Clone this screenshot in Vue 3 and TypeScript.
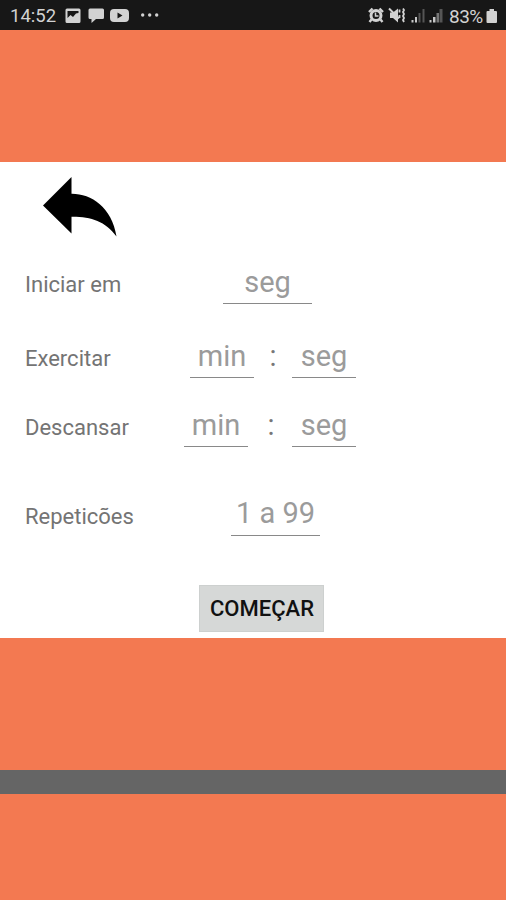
<script setup lang="ts">
import { reactive } from 'vue'

interface Field {
  key: string
  hint: string
  wide?: boolean
}
interface Row {
  name: string
  label: string
  fields: Field[]
}

const rows: Row[] = [
  { name: 'start', label: 'Iniciar em', fields: [{ key: 'startSec', hint: 'seg', wide: true }] },
  { name: 'work', label: 'Exercitar', fields: [{ key: 'workMin', hint: 'min' }, { key: 'workSec', hint: 'seg' }] },
  { name: 'rest', label: 'Descansar', fields: [{ key: 'restMin', hint: 'min' }, { key: 'restSec', hint: 'seg' }] },
  { name: 'reps', label: 'Repeticões', fields: [{ key: 'reps', hint: '1 a 99', wide: true }] },
]
const values = reactive<Record<string, string>>({})
</script>

<template>
  <div class="screen">
    <header class="status">
      <span class="clock">14:52</span>
      <svg class="left-icons" width="98" height="20" viewBox="64 6 98 20">
        <path fill="#d2d2d2" fill-rule="evenodd" d="M67 8.500h12q1.500 0 1.500 1.500v11.500q0 1.500-1.500 1.500H67q-1.500 0-1.500-1.500V10q0-1.500 1.500-1.500zM67.500 11v7l3-3 2.500 2 3-3.500 2.500-.5V11z" />
        <path fill="#d2d2d2" d="M90 8.500h12.500q1.500 0 1.500 1.500v7.500q0 1.500-1.500 1.500H96l-4.500 4V19H90q-1.500 0-1.500-1.500V10q0-1.500 1.500-1.500z" />
        <path fill="#d2d2d2" fill-rule="evenodd" d="M114 9h11q4 0 4 4v5q0 4-4 4h-11q-4 0-4-4v-5q0-4 4-4zM117.500 12.500v6l5-3z" />
        <g fill="#d2d2d2">
          <circle cx="142.700" cy="15" r="1.700" />
          <circle cx="149.700" cy="15" r="1.700" />
          <circle cx="156.700" cy="15" r="1.700" />
        </g>
      </svg>
      <span class="spacer"></span>
      <svg class="right-icons" width="78" height="20" viewBox="367 6 78 20">
        <circle cx="376" cy="15.500" r="5" fill="none" stroke="#d2d2d2" stroke-width="3" />
        <path d="M369 12l3.500-3.500M379.500 8.500l3.500 3.500M371.500 19.500l-2 2.500M380.500 19.500l2 2.500" fill="none" stroke="#d2d2d2" stroke-width="2.400" />
        <path d="M375.500 12.500V16h3" fill="none" stroke="#d2d2d2" stroke-width="1.500" />
        <path d="M390 12.500h3l5-4v14L393 18h-3z" fill="#d2d2d2" />
        <path d="M389 8.500l10 10" stroke="#d2d2d2" stroke-width="2" />
        <path d="M399.500 9.500v3M399.500 15v3M403 8.500l1 1.500-1 2 1 2-1 2 1 2-1 2 1 2" fill="none" stroke="#d2d2d2" stroke-width="1.800" />
        <path d="M411.500 20h2v2.500h-2zM415 17h2v5.500h-2z" fill="#c8c8c8" />
        <path d="M418.500 13h2v9.500h-2zM422.500 9h2v13.500h-2z" fill="#555" />
        <path d="M429.500 20h2v2.500h-2zM433 17h2.500v5.500H433z" fill="#c8c8c8" />
        <path d="M436.500 13h2.500v9.500h-2.500z" fill="#777" />
        <path d="M439.500 9h3v13.500h-3z" fill="#555" />
      </svg>
      <span class="percent">83%</span>
      <svg class="battery" width="12" height="16" viewBox="0 0 12 16">
        <path d="M3.500 1h4.500v2H10q1 0 1 1v10q0 1-1 1H1.500q-1 0-1-1V4q0-1 1-1h2z" fill="#d2d2d2" />
      </svg>
    </header>

    <main class="panel">
      <button class="back" aria-label="Voltar">
        <svg width="76" height="62" viewBox="42 176 76 62">
          <path d="M43 205.500L71.500 177v16.700C91 193.500 112 207 116.500 236.500C105 221 91 216.500 71.500 216.700V233.500z" />
        </svg>
      </button>
      <div v-for="row in rows" :key="row.name" class="row" :class="row.name">
        <span class="label">{{ row.label }}</span>
        <template v-for="(field, i) in row.fields" :key="field.key">
          <span v-if="i > 0" class="colon">:</span>
          <input v-model="values[field.key]" class="field" :class="{ wide: field.wide }" :placeholder="field.hint" :aria-label="row.label" />
        </template>
      </div>
      <button class="begin">COMEÇAR</button>
    </main>
    <div class="divider"></div>
  </div>
</template>

<style>
body {
  margin: 0;
}
</style>

<style scoped>
.screen {
  display: flex;
  flex-direction: column;
  width: 506px;
  height: 900px;
  overflow: hidden;
  background: #f37951;
  font-family: Roboto, sans-serif;
}
.status {
  display: flex;
  align-items: center;
  box-sizing: border-box;
  height: 30px;
  padding: 2px 8px 0 10px;
  background: #171717;
  color: #d2d2d2;
}
.status svg {
  flex: none;
  display: block;
}
.clock {
  width: 54px;
  font-size: 18.500px;
  white-space: nowrap;
}
.spacer {
  flex: 1;
}
.percent {
  width: 37px;
  margin-left: 4px;
  font-size: 19px;
  letter-spacing: -0.500px;
  white-space: nowrap;
}
.panel {
  display: flex;
  flex-direction: column;
  align-items: flex-start;
  box-sizing: border-box;
  height: 476px;
  margin-top: 132px;
  padding: 14px 0 0 25px;
  background: #fff;
}
.back {
  height: 62px;
  margin-left: 17px;
  padding: 0;
  border: 0;
  background: none;
}
.back svg {
  display: block;
}
.row {
  display: flex;
  align-items: center;
  height: 44px;
}
.start {
  margin-top: 22px;
}
.work {
  margin-top: 30px;
}
.rest {
  margin-top: 25px;
}
.reps {
  margin-top: 45px;
}
.label {
  width: 165px;
  color: #747474;
  font-size: 22px;
  line-height: 26px;
  padding-top: 5px;
}
.rest .label {
  width: 159px;
}
.start .label {
  width: 198px;
}
.reps .label {
  width: 206px;
}
.field {
  box-sizing: border-box;
  width: 64px;
  height: 44px;
  padding: 0;
  border: 0;
  border-bottom: 1px solid #898989;
  border-radius: 0;
  outline: 0;
  background: none;
  color: #333;
  font: 29px Roboto, sans-serif;
  text-align: center;
}
.field::placeholder {
  color: #9b9b9b;
  opacity: 1;
}
.wide {
  width: 89px;
}
.reps .field {
  padding-bottom: 2px;
}
.colon {
  box-sizing: border-box;
  width: 38px;
  padding-right: 2px;
  color: #777;
  font-size: 29px;
  text-align: center;
}
.work .colon {
  padding: 0;
}
.rest .colon {
  width: 44px;
  padding: 0 0 0 2px;
}
.begin {
  width: 125px;
  height: 47px;
  margin: 49px 0 0 174px;
  padding: 0 0 0 1px;
  border: 1px solid #cdd0cf;
  background: #d6d8d7;
  color: #111;
  font: 500 22px Roboto, sans-serif;
}
.divider {
  height: 24px;
  margin-top: 132px;
  background: #656565;
}
</style>
